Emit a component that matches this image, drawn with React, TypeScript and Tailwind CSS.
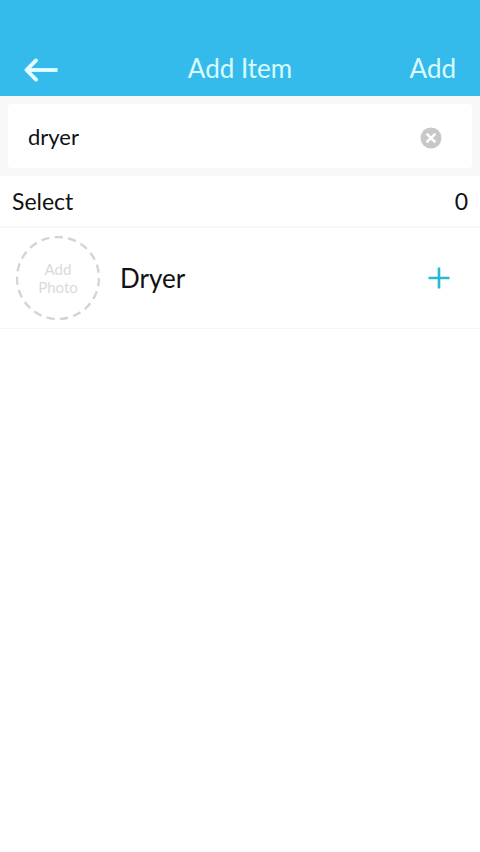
import { useState } from 'react'

type Item = { id: string; name: string }

const CATALOG: Item[] = [{ id: 'dryer', name: 'Dryer' }]

function BackArrow() {
  return (
    <svg width="34" height="24" viewBox="0 0 34 24" fill="none" stroke="currentColor" strokeWidth="3.8" aria-hidden="true">
      <path d="M2 12H33.5" />
      <path d="M12 2.4L2.5 12L12 21.6" strokeLinecap="round" strokeLinejoin="round" />
    </svg>
  )
}

function ClearIcon() {
  return (
    <svg width="22" height="22" viewBox="0 0 22 22" aria-hidden="true">
      <circle cx="11" cy="11" r="10.5" fill="#c8c8c8" />
      <path d="M7.3 7.3L14.7 14.7M14.7 7.3L7.3 14.7" stroke="#fff" strokeWidth="2.6" strokeLinecap="round" />
    </svg>
  )
}

function PlusIcon() {
  return (
    <svg width="22" height="22" viewBox="0 0 22 22" stroke="#27b9d3" strokeWidth="2.6" aria-hidden="true">
      <path d="M11 0.5V21.5M0.5 11H21.5" />
    </svg>
  )
}

export default function App() {
  const [query, setQuery] = useState('dryer')
  const [selected, setSelected] = useState<string[]>([])

  const results = CATALOG.filter(i => i.name.toLowerCase().includes(query.trim().toLowerCase()))

  function toggle(id: string) {
    setSelected(prev => (prev.includes(id) ? prev.filter(s => s !== id) : [...prev, id]))
  }

  return (
    <div className="min-h-screen bg-white font-[Lato,sans-serif] text-[#111111]">
      <header className="grid grid-cols-[1fr_auto_1fr] items-center bg-[#35bbeb] px-6 pt-11 pb-1 text-[#d9fbff]">
        <button type="button" aria-label="Back" className="justify-self-start pt-1 text-[#e6feff]">
          <BackArrow />
        </button>
        <h1 className="text-[26px] leading-12">Add Item</h1>
        <button type="button" className="justify-self-end text-[26px] leading-12">Add</button>
      </header>

      <div className="bg-[#f8f8f8] p-2">
        <div className="flex items-center rounded-sm bg-white pr-[30px] pl-5">
          <input
            type="text"
            aria-label="Search items"
            value={query}
            onChange={e => setQuery(e.target.value)}
            onFocus={e => e.target.setSelectionRange(query.length, query.length)}
            autoFocus
            className="h-16 min-w-0 flex-1 bg-transparent text-[22px] caret-[#dddddd] outline-none"
          />
          <button type="button" aria-label="Clear" onClick={() => setQuery('')} className="pt-1">
            <ClearIcon />
          </button>
        </div>
      </div>

      <div className="flex items-center justify-between border-b-2 border-[#f8f8f8] px-3 text-[23px] leading-[50px]">
        <h2>Select</h2>
        <span>{selected.length}</span>
      </div>

      <ul>
        {results.map(item => (
          <li key={item.id} className="flex items-center border-b border-[#f5f5f5] py-2 pr-[30px] pl-4">
            <button type="button" className="relative flex size-[84px] shrink-0 items-center justify-center rounded-full">
              <svg className="absolute inset-0" width="84" height="84" viewBox="0 0 84 84" fill="none" aria-hidden="true">
                <circle cx="42" cy="42" r="41" stroke="#d4d4d4" strokeWidth="2.4" strokeDasharray="8.4 5.4" pathLength="262.2" />
              </svg>
              <span className="w-12 text-[15px] leading-[18px] text-[#dadada]">Add Photo</span>
            </button>
            <span className="ml-5 flex-1 text-[26px]">{item.name}</span>
            <button type="button" aria-label={`Add ${item.name}`} onClick={() => toggle(item.id)}>
              <PlusIcon />
            </button>
          </li>
        ))}
      </ul>
    </div>
  )
}
